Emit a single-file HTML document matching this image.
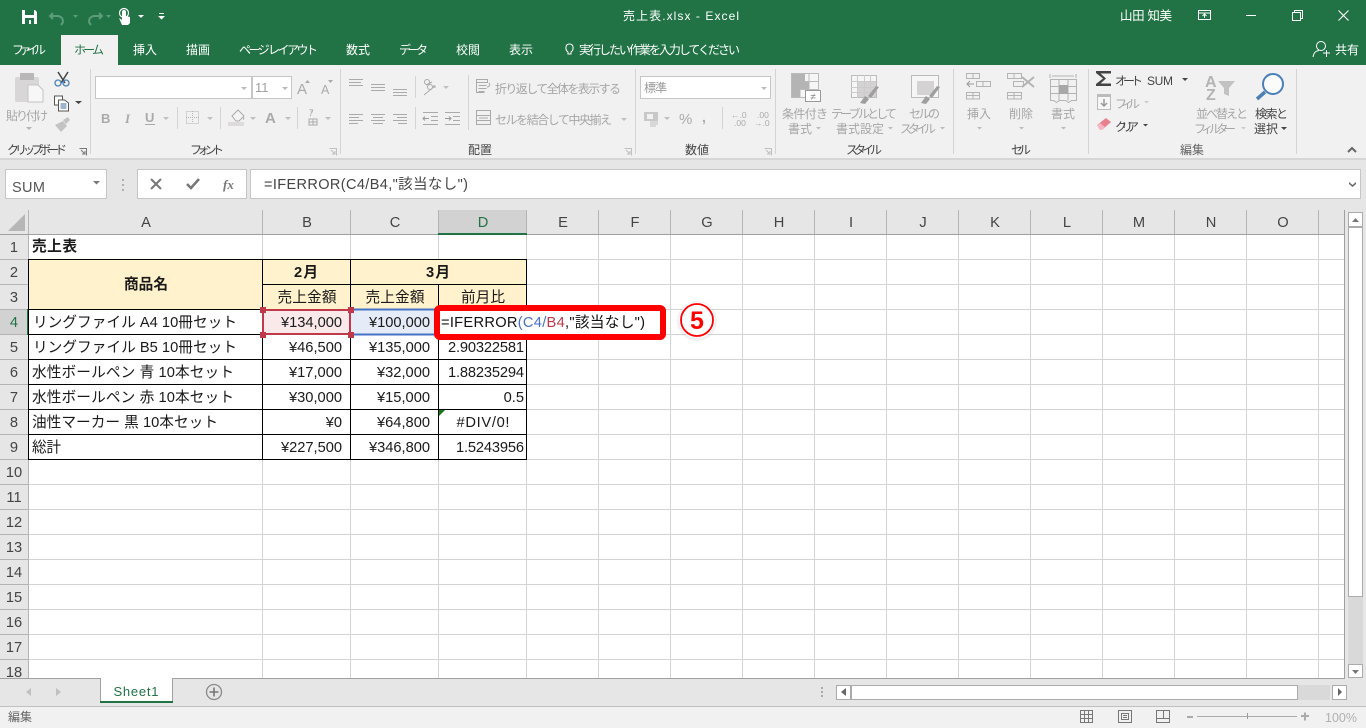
<!DOCTYPE html>
<html lang="ja"><head><meta charset="utf-8"><title>売上表.xlsx - Excel</title>
<style>
html,body{margin:0;padding:0;width:1366px;height:728px;overflow:hidden;background:#e6e6e6}
svg{display:block}
text{font-family:"Liberation Sans","Noto Sans CJK JP",sans-serif}
.rb{font-size:12px;fill:#a6a6a6}
.rd{font-size:12px;fill:#444}
.gl{font-size:12px;fill:#444}
.w{fill:#fff;font-size:12px}
.h{font-size:14.67px;fill:#444;text-anchor:middle}
.c{font-size:14.67px;fill:#1a1a1a}
.r{font-size:14.67px;fill:#1a1a1a;text-anchor:end}
.m{font-size:14.67px;fill:#1a1a1a;text-anchor:middle}
.b{font-weight:700}
.ic{fill:none;stroke:#b4b4b4;stroke-width:1}
.ig{fill:#b4b4b4}
</style></head><body>
<svg width="1366" height="728" viewBox="0 0 1366 728" xmlns="http://www.w3.org/2000/svg">
<!-- title bar -->
<rect width="1366" height="65" fill="#217346"/>
<path d="M22 10h13l2 2v12H22z" fill="#fff"/><rect x="25" y="10" width="9" height="5" fill="#217346"/><rect x="25" y="18" width="9" height="6" fill="#217346"/><rect x="29" y="20" width="2" height="4" fill="#fff"/>
<path d="M53 13l-3 3 3 3M50 16h7c5 0 6 4 6 5 0 2-1 3-2 4" fill="none" stroke="#5d9c7b" stroke-width="2"/><path d="M73 15h5l-2.500 3z" fill="#5d9c7b"/>
<path d="M99 13l3 3-3 3M102 16h-7c-5 0-6 4-6 5 0 2 1 3 2 4" fill="none" stroke="#5d9c7b" stroke-width="2"/><path d="M106 15h5l-2.500 3z" fill="#5d9c7b"/>
<path d="M119 18l3 2v-8a2 2 0 0 1 4 0v4l4 1v6l-2 2h-6z" fill="#fff"/><circle cx="124" cy="13" r="4.500" fill="none" stroke="#fff" stroke-width="1.200"/>
<path d="M138 15h6l-3 3z" fill="#fff"/><path d="M159 13h5v1h-5zM158 16h7l-3.500 3.500z" fill="#fff"/>
<text x="681" y="20" text-anchor="middle" class="w" textLength="116">売上表.xlsx - Excel</text>
<text x="1120" y="20" class="w" textLength="52" style="font-size:12.500px">山田 知美</text>
<rect x="1198.500" y="10.500" width="12" height="9" fill="none" stroke="#fff"/><path d="M1198 13h13M1204.500 18v-3M1202.500 16l2-2 2 2" fill="none" stroke="#fff"/>
<rect x="1246" y="15" width="10" height="1" fill="#fff"/>
<path d="M1292.500 12.500h8v8h-8zM1294.500 12.500v-2h8v8h-2" fill="none" stroke="#fff"/>
<path d="M1338.500 10.500l10 10M1348.500 10.500l-10 10" fill="none" stroke="#fff" stroke-width="1.100"/>
<!-- tabs -->
<rect x="61" y="35" width="57" height="30" fill="#f1f1f1"/>
<text x="12" y="54" class="w" textLength="34">ファイル</text>
<text x="74" y="54" style="font-size:12px;fill:#217346" textLength="30">ホーム</text>
<text x="133" y="54" class="w" textLength="24">挿入</text>
<text x="186" y="54" class="w" textLength="24">描画</text>
<text x="239" y="54" class="w" textLength="79">ページ レイアウト</text>
<text x="346" y="54" class="w" textLength="24">数式</text>
<text x="399" y="54" class="w" textLength="29">データ</text>
<text x="456" y="54" class="w" textLength="24">校閲</text>
<text x="509" y="54" class="w" textLength="24">表示</text>
<path d="M568 52v2h3v-2c3-2 3-8-1.500-8s-4.500 6-1.500 8z" fill="none" stroke="#fff"/>
<text x="579" y="54" class="w" textLength="161">実行したい作業を入力してください</text>
<circle cx="1321" cy="46" r="4.500" fill="none" stroke="#fff"/><path d="M1313 57c1-5 3-6 6-6.500M1323 53h7M1326.500 50v7" fill="none" stroke="#fff"/>
<text x="1335" y="54" class="w" textLength="24">共有</text>
<!-- ribbon -->
<rect y="65" width="1366" height="93" fill="#f1f1f1"/>
<rect y="158" width="1366" height="2" fill="#d6d6d6"/>
<rect y="160" width="1366" height="50" fill="#e6e6e6"/>
<g fill="#d4d4d4"><rect x="90" y="69" width="1" height="85"/><rect x="340" y="69" width="1" height="85"/><rect x="635" y="69" width="1" height="85"/><rect x="775" y="69" width="1" height="85"/><rect x="953" y="69" width="1" height="85"/><rect x="1088" y="69" width="1" height="85"/><rect x="1296" y="69" width="1" height="85"/><rect x="415" y="76" width="1" height="22"/><rect x="415" y="107" width="1" height="22"/><rect x="468" y="75" width="1" height="55"/><rect x="177" y="107" width="1" height="22"/><rect x="220" y="107" width="1" height="22"/><rect x="297" y="107" width="1" height="22"/><rect x="722" y="107" width="1" height="22" /></g>
<!-- clipboard -->
<rect x="15" y="77" width="24" height="25" rx="2" fill="#d9d6d8"/><rect x="20" y="73" width="14" height="7" fill="#b9b7b8"/><path d="M28 85h10l5 5v12H28z" fill="#f7f7f7" stroke="#c4c4c4"/>
<text x="6" y="120" class="rb" textLength="42">貼り付け</text>
<path d="M26 127h6l-3 3z" fill="#b4b4b4"/>
<path d="M58 72l7 11M68 72l-7 11" stroke="#444" stroke-width="1.500" fill="none"/><circle cx="58" cy="83" r="3" fill="none" stroke="#4d82b8" stroke-width="1.300"/><circle cx="66" cy="83" r="3" fill="none" stroke="#4d82b8" stroke-width="1.300"/>
<path d="M54.500 105v-9h8l0 9z" fill="#fff" stroke="#555"/><path d="M58.500 100h6l4 3v8h-10z" fill="#fff" stroke="#555"/><path d="M60.500 104h6M60.500 106h6M60.500 108h6" stroke="#3a6ea5"/>
<path d="M75 101h7l-3.500 3z" fill="#444"/>
<path d="M55 125l8-4 4 5-6 6zM63 120l5-3 2 3-4 4z" fill="#c3c3c3"/>
<text x="7" y="154" class="gl" textLength="60">クリップボード</text>
<path d="M79.500 148.500h7v7M81 150l4 4M85 151v3h-3" fill="none" stroke="#777"/>
<!-- font -->
<rect x="95.500" y="76.500" width="156" height="22" fill="#fff" stroke="#c6c6c6"/><rect x="252.500" y="76.500" width="39" height="22" fill="#fff" stroke="#c6c6c6"/>
<path d="M241 87h6l-3 3z M282 87h6l-3 3z" fill="#bbb"/>
<text x="255" y="92" style="font-size:13px;fill:#a0a0a0">11</text>
<text x="297" y="94" style="font-size:15px;fill:#aaa" font-weight="400">A</text><path d="M305 83h5l-2.500-3z" fill="#aaa"/>
<text x="321" y="94" style="font-size:12.500px;fill:#aaa">A</text><path d="M328 80h5l-2.500 3z" fill="#aaa"/>
<text x="101" y="123" class="b" style="font-size:13px;fill:#aaa">B</text>
<text x="125" y="123" style="font-size:13px;fill:#aaa;font-style:italic;font-family:'Liberation Serif',serif" font-weight="700">I</text>
<text x="145" y="122" class="b" style="font-size:13px;fill:#aaa">U</text><rect x="145" y="124" width="10" height="1" fill="#aaa"/>
<path d="M163 117h6l-3 3z M207 117h6l-3 3z M250 117h6l-3 3z M285 117h6l-3 3z M325 117h6l-3 3z" fill="#c0c0c0"/>
<rect x="186.500" y="111.500" width="12" height="12" fill="none" stroke="#b4b4b4" stroke-dasharray="1 1"/><path d="M192.500 111v12M186 117.500h13" stroke="#b4b4b4" stroke-dasharray="1 1"/>
<path d="M232 116l6-6 6 6-5 5h-3z" fill="#f4f4f4" stroke="#aaa"/><path d="M243 116c1 2 2 3 0 4z" fill="#aaa"/><rect x="228" y="122" width="16" height="4" fill="#dcdadb"/>
<text x="265" y="123" class="b" style="font-size:15px;fill:#aaa">A</text>
<text x="309" y="116" style="font-size:9px;fill:#999">ｱ</text><rect x="309" y="119" width="8" height="6" fill="none" stroke="#aaa"/><path d="M313 119v6M309 122h8" stroke="#aaa"/>
<text x="190" y="154" class="gl" textLength="34">フォント</text>
<path d="M329.500 148.500h7v7M331 150l4 4M335 151v3h-3" fill="none" stroke="#c0c0c0"/>
<!-- align -->
<g stroke="#aaa" fill="none"><path d="M349 79.500h14M349 82.500h12M349 85.500h14M371 84.500h14M371 87.500h14M371 90.500h14M393 89.500h14M393 92.500h14M393 95.500h14M349 114.500h14M349 117.500h10M349 120.500h14M349 123.500h9M371 114.500h14M373 117.500h10M371 120.500h14M373 123.500h10M393 114.500h14M397 117.500h10M393 120.500h14M398 123.500h9M423 112.500h15M431 116.500h7M431 120.500h7M423 124.500h15M445 112.500h15M453 116.500h7M453 120.500h7M445 124.500h15"/><path d="M429 118.500h-6m2-2l-2 2 2 2M445 118.500h6m-2-2l2 2-2 2" stroke="#999"/><path d="M424 95l11-9m-2 0h2v2M426 85l6-3" stroke="#aaa"/></g>
<circle cx="427" cy="82" r="2.500" fill="none" stroke="#aaa"/><circle cx="430" cy="87" r="2.500" fill="none" stroke="#aaa"/>
<path d="M443 86h6l-3 3z" fill="#c0c0c0"/>
<path d="M476.500 79.500h11v3h-11zM476.500 82.500v10h8M478.500 85.500h8M478.500 88.500h8M478.500 91.500h6M489 83c1 1 1 4-2 4" fill="none" stroke="#aaa"/>
<text x="495" y="93" class="rb" textLength="126">折り返して全体を表示する</text>
<rect x="476.500" y="110.500" width="14" height="14" fill="none" stroke="#aaa"/><path d="M476 115.500h15M476 120.500h15M479 118h9" stroke="#aaa" fill="none"/>
<text x="495" y="124" class="rb" textLength="117">セルを結合して中央揃え</text>
<path d="M621 118h6l-3 3z" fill="#c0c0c0"/>
<text x="468" y="154" class="gl" textLength="24">配置</text>
<path d="M624.500 148.500h7v7M626 150l4 4M630 151v3h-3" fill="none" stroke="#c0c0c0"/>
<!-- number -->
<rect x="640.500" y="76.500" width="130" height="22" fill="#fff" stroke="#c6c6c6"/>
<text x="644" y="92" class="rb" style="fill:#999" textLength="23">標準</text>
<path d="M761 87h6l-3 3z" fill="#bbb"/>
<rect x="644" y="112" width="14" height="9" fill="#c8c8c8"/><rect x="647" y="114" width="6" height="5" fill="#f1f1f1"/><path d="M650 122h8M650 124h8M650 126h6" stroke="#c0c0c0"/>
<path d="M664 117h6l-3 3z" fill="#c0c0c0"/>
<text x="679" y="124" style="font-size:15px;fill:#aaa">%</text>
<text x="702" y="122" class="b" style="font-size:14px;fill:#aaa">,</text>
<text x="731" y="118" style="font-size:8.500px;fill:#aaa">←.0</text><text x="734" y="126" style="font-size:8.500px;fill:#aaa">.00</text>
<text x="757" y="118" style="font-size:8.500px;fill:#aaa">.00</text><text x="754" y="126" style="font-size:8.500px;fill:#aaa">→.0</text>
<text x="685" y="154" class="gl" textLength="24">数値</text>
<path d="M764.500 148.500h7v7M766 150l4 4M770 151v3h-3" fill="none" stroke="#c0c0c0"/>
<!-- styles -->
<g stroke="#bbb" fill="#f6f6f6"><rect x="791.500" y="73.500" width="27" height="24"/></g>
<path d="M800 73.500v24M809 73.500v24M791 81.500h27M791 89.500h27" stroke="#bbb"/><path d="M792 74h8v23h-8z M800 82h9v7h-9z M800 74h5v8h-5z" fill="#b4b4b4"/>
<rect x="805.500" y="90.500" width="15" height="11" fill="#fff" stroke="#999"/><text x="813" y="100" text-anchor="middle" style="font-size:10px;fill:#888">≠</text>
<rect x="851.500" y="75.500" width="25" height="22" fill="#f6f6f6" stroke="#bbb"/><rect x="857" y="82" width="19" height="15" fill="#d4d2d3"/><path d="M851 81.500h25M851 87.500h25M851 92.500h25M857.500 75v23M864.500 75v23M870.500 75v23" stroke="#ccc"/>
<path d="M860 103l5-7 4 3-4 5zM868 96l8-10 3 1-8 11z" fill="#9f9f9f"/>
<rect x="911.500" y="75.500" width="27" height="22" fill="#f6f6f6" stroke="#bbb"/><rect x="917" y="81" width="17" height="14" fill="#d4d2d3"/>
<path d="M921 103l5-7 4 3-4 5zM929 96l8-10 3 1-8 11z" fill="#9f9f9f"/>
<text x="782" y="118" class="rb" textLength="46">条件付き</text><text x="788" y="133" class="rb" textLength="24">書式</text><path d="M816 127h5l-2.500 2.500z" fill="#bbb"/>
<text x="831" y="118" class="rb" textLength="66">テーブルとして</text><text x="836" y="133" class="rb" textLength="48">書式設定</text><path d="M888 127h5l-2.500 2.500z" fill="#bbb"/>
<text x="909" y="118" class="rb" textLength="31">セルの</text><text x="900" y="133" class="rb" textLength="36">スタイル</text><path d="M940 127h5l-2.500 2.500z" fill="#bbb"/>
<text x="846" y="154" class="gl" textLength="36">スタイル</text>
<!-- cells group -->
<g fill="none" stroke="#b4b4b4"><path d="M966.500 73.500h13v5h-13zM973 73.500v5M966.500 92.500h13v6.500h-13zM973 92v7M966.500 95.500h13M976.500 81.500h14v5h-14zM983 81.500v5"/><path d="M974 84h-7m3-3l-3 3 3 3" stroke="#999"/>
<path d="M1007.500 73.500h14v5h-14zM1014 73v6M1007.500 92.500h14v6.500h-14zM1014 92v7M1007.500 95.500h14M1013.500 81.500h10v5h-10z"/><path d="M1022 77l12 10M1034 77l-12 10" stroke-width="2"/>
<path d="M1050.500 79.500h26v21h-5l-3 2-3-2h-6l-3 2-3-2h-3zM1059 79.500v21M1068 79.500v21M1050 86.500h27M1050 93.500h27M1050 74v4M1076 74v4M1052 76h22" /></g>
<rect x="1059" y="85" width="9" height="9" fill="#a8a8a8"/>
<text x="967" y="118" class="rb" textLength="24">挿入</text><path d="M977 127h5l-2.500 2.500z" fill="#bbb"/>
<text x="1009" y="118" class="rb" textLength="24">削除</text><path d="M1019 127h5l-2.500 2.500z" fill="#bbb"/>
<text x="1051" y="118" class="rb" textLength="24">書式</text><path d="M1061 127h5l-2.500 2.500z" fill="#bbb"/>
<text x="1011" y="154" class="gl" textLength="20">セル</text>
<!-- edit -->
<path d="M1111 71h-15v2l7 5.500-7 5.500v2h15v-2.500h-10.500l5.500-5-5.500-5h10.500z" fill="#444"/>
<text x="1115" y="85" class="rd" textLength="28">オート</text><text x="1147" y="85" class="rd" textLength="26">SUM</text><path d="M1182 78h6l-3 3z" fill="#444"/>
<rect x="1097.500" y="94.500" width="13" height="15" fill="#f6f6f6" stroke="#bbb"/><rect x="1097" y="94" width="14" height="3" fill="#bbb"/><path d="M1104 99v7m-3-3l3 3 3-3" stroke="#999" fill="none" stroke-width="1.500"/>
<text x="1115" y="108" class="rb" textLength="25">フィル</text><path d="M1144 101h5l-2.500 2.500z" fill="#ccc"/>
<path d="M1097 125l9-7 5 4-9 8h-2z" fill="#e98090"/><path d="M1097 125l3-2 5 4-3 3h-2z" fill="#f4b6c0"/>
<text x="1115" y="131" class="rd" textLength="24">クリア</text><path d="M1143 124h5l-2.500 2.500z" fill="#444"/>
<text x="1205" y="87" class="b" style="font-size:16px;fill:#b4b4b4">A</text><text x="1206" y="100" class="b" style="font-size:16px;fill:#b4b4b4">Z</text>
<path d="M1218 81h17l-6 7v8l-5-2v-6z" fill="#c2c2c2"/>
<text x="1196" y="118" class="rb" textLength="52">並べ替えと</text><text x="1194" y="133" class="rb" textLength="42">フィルター</text><path d="M1241 127h5l-2.500 2.500z" fill="#ccc"/>
<circle cx="1273" cy="84" r="10" fill="#fbfbfb" stroke="#4a7fb8" stroke-width="2"/><path d="M1265 92l-8 7" stroke="#4a7fb8" stroke-width="3.500"/>
<text x="1255" y="118" class="rd" textLength="33">検索と</text><text x="1254" y="133" class="rd" textLength="24">選択</text><path d="M1281 127h6l-3 3z" fill="#444"/>
<text x="1180" y="154" class="gl" style="fill:#666" textLength="24">編集</text>
<path d="M1348 152l4-4 4 4" fill="none" stroke="#666" stroke-width="2"/>
<!-- formula bar -->
<rect x="5.500" y="169.500" width="101" height="29" fill="#fff" stroke="#c6c6c6"/>
<text x="12" y="192" style="font-size:14.500px;fill:#555" textLength="33">SUM</text>
<path d="M93 181h7l-3.500 3.500z" fill="#777"/>
<path d="M122 179h2v2h-2zM122 184h2v2h-2zM122 189h2v2h-2z" fill="#b0b0b0"/>
<rect x="137.500" y="169.500" width="109" height="29" fill="#fff" stroke="#c6c6c6"/>
<path d="M151 179l10 10M161 179l-10 10" stroke="#777" stroke-width="2"/>
<path d="M187 184l4 4 8-9" stroke="#777" stroke-width="2.500" fill="none"/>
<text x="223" y="189" style="font-family:'Liberation Serif',serif;font-style:italic;font-weight:700;font-size:13px;fill:#777">fx</text>
<rect x="250.500" y="169.500" width="1110" height="29" fill="#fff" stroke="#c6c6c6"/>
<text x="264" y="189" style="font-size:14.500px;fill:#444" textLength="204">=IFERROR(C4/B4,"該当なし")</text>
<path d="M1349 182l3.500 3 3.500-3v2l-3.500 3-3.500-3z" fill="#666"/>
<!-- grid -->
<rect x="29" y="235" width="1316" height="443" fill="#fff"/>
<rect x="0" y="210" width="1345" height="25" fill="#e6e6e6"/>
<path d="M8 231l17-17v17z" fill="#b6b6b6"/>
<rect x="438" y="210" width="89" height="24" fill="#d2d2d2"/>
<g fill="#b4b4b4"><rect x="28" y="210" width="1" height="25"/><rect x="262" y="210" width="1" height="25"/><rect x="350" y="210" width="1" height="25"/><rect x="438" y="210" width="1" height="25"/><rect x="526" y="210" width="1" height="25"/><rect x="598" y="210" width="1" height="25"/><rect x="670" y="210" width="1" height="25"/><rect x="742" y="210" width="1" height="25"/><rect x="814" y="210" width="1" height="25"/><rect x="886" y="210" width="1" height="25"/><rect x="958" y="210" width="1" height="25"/><rect x="1030" y="210" width="1" height="25"/><rect x="1102" y="210" width="1" height="25"/><rect x="1174" y="210" width="1" height="25"/><rect x="1246" y="210" width="1" height="25"/><rect x="1318" y="210" width="1" height="25"/></g>
<rect x="0" y="234" width="1345" height="1" fill="#a0a0a0"/><rect x="438" y="233" width="89" height="2" fill="#217346"/>
<path stroke="#d4d4d4" fill="none" d="M0 259.500H1345M0 284.500H1345M0 309.500H1345M0 334.500H1345M0 359.500H1345M0 384.500H1345M0 409.500H1345M0 434.500H1345M0 459.500H1345M0 484.500H1345M0 509.500H1345M0 534.500H1345M0 559.500H1345M0 584.500H1345M0 609.500H1345M0 634.500H1345M0 659.500H1345M262.500 235V678M350.500 235V678M438.500 235V678M526.500 235V678M598.500 235V678M670.500 235V678M742.500 235V678M814.500 235V678M886.500 235V678M958.500 235V678M1030.500 235V678M1102.500 235V678M1174.500 235V678M1246.500 235V678M1318.500 235V678"/>
<rect x="0" y="235" width="28" height="443" fill="#e6e6e6"/>
<path stroke="#b4b4b4" fill="none" d="M0 259.500H28M0 284.500H28M0 309.500H28M0 334.500H28M0 359.500H28M0 384.500H28M0 409.500H28M0 434.500H28M0 459.500H28M0 484.500H28M0 509.500H28M0 534.500H28M0 559.500H28M0 584.500H28M0 609.500H28M0 634.500H28M0 659.500H28M28.500 235V678"/>
<rect x="0" y="310" width="28" height="24" fill="#d2d2d2"/><rect x="27" y="309" width="2" height="26" fill="#217346"/>
<rect x="1344" y="210" width="1" height="468" fill="#a0a0a0"/>
<text class="h" x="146" y="227">A</text><text class="h" x="307" y="227">B</text><text class="h" x="395" y="227">C</text><text class="h" x="483" y="227" style="fill:#217346">D</text><text class="h" x="563" y="227">E</text><text class="h" x="635" y="227">F</text><text class="h" x="707" y="227">G</text><text class="h" x="779" y="227">H</text><text class="h" x="851" y="227">I</text><text class="h" x="923" y="227">J</text><text class="h" x="995" y="227">K</text><text class="h" x="1067" y="227">L</text><text class="h" x="1139" y="227">M</text><text class="h" x="1211" y="227">N</text><text class="h" x="1283" y="227">O</text>
<text class="h" x="14" y="252">1</text><text class="h" x="14" y="277">2</text><text class="h" x="14" y="302">3</text><text class="h" x="14" y="327" style="fill:#217346">4</text><text class="h" x="14" y="352">5</text><text class="h" x="14" y="377">6</text><text class="h" x="14" y="402">7</text><text class="h" x="14" y="427">8</text><text class="h" x="14" y="452">9</text><text class="h" x="14" y="477">10</text><text class="h" x="14" y="502">11</text><text class="h" x="14" y="527">12</text><text class="h" x="14" y="552">13</text><text class="h" x="14" y="577">14</text><text class="h" x="14" y="602">15</text><text class="h" x="14" y="627">16</text><text class="h" x="14" y="652">17</text><text class="h" x="14" y="677">18</text>
<!-- table fills -->
<rect x="29" y="260" width="498" height="49" fill="#fff2cc"/>
<rect x="263" y="310" width="87" height="24" fill="#f9e9ea"/>
<rect x="351" y="310" width="87" height="24" fill="#e6ecf7"/>
<path stroke="#000" fill="none" d="M28 259.500H527M263 284.500H527M28 309.500H527M28 334.500H527M28 359.500H527M28 384.500H527M28 409.500H527M28 434.500H527M28 459.500H527M28.500 260V460M262.500 259V460M350.500 259V460M438.500 284V460M526.500 259V460"/>
<!-- ranges -->
<path d="M351 309.500h87M351 334.500h87" fill="none" stroke="#4472c4" stroke-width="2"/>
<rect x="263" y="310" width="87" height="24" fill="none" stroke="#c0394b" stroke-width="2"/>
<g fill="#c0394b"><rect x="260" y="307" width="6" height="6"/><rect x="348" y="307" width="6" height="6"/><rect x="260" y="332" width="6" height="6"/><rect x="348" y="332" width="6" height="6"/></g>
<!-- cell text -->
<text class="c b" x="32" y="251" textLength="45">売上表</text>
<text class="m b" x="146" y="289" textLength="44">商品名</text>
<text class="m b" x="306" y="277" textLength="24">2月</text>
<text class="m b" x="438" y="277" textLength="24">3月</text>
<text class="m" x="307" y="302" textLength="59">売上金額</text>
<text class="m" x="395" y="302" textLength="59">売上金額</text>
<text class="m" x="483" y="302" textLength="44">前月比</text>
<text class="c" x="33" y="327" textLength="204">リングファイル A4 10冊セット</text>
<text class="c" x="33" y="352" textLength="204">リングファイル B5 10冊セット</text>
<text class="c" x="32" y="377" textLength="202">水性ボールペン 青 10本セット</text>
<text class="c" x="32" y="402" textLength="202">水性ボールペン 赤 10本セット</text>
<text class="c" x="32" y="427" textLength="186">油性マーカー 黒 10本セット</text>
<text class="c" x="32" y="452" textLength="29">総計</text>
<text class="r" x="342" y="327" textLength="61">¥134,000</text><text class="r" x="342" y="352" textLength="53">¥46,500</text><text class="r" x="342" y="377" textLength="53">¥17,000</text><text class="r" x="342" y="402" textLength="53">¥30,000</text><text class="r" x="342" y="427">¥0</text><text class="r" x="342" y="452" textLength="61">¥227,500</text>
<text class="r" x="430" y="327" textLength="61">¥100,000</text><text class="r" x="430" y="352" textLength="61">¥135,000</text><text class="r" x="430" y="377" textLength="53">¥32,000</text><text class="r" x="430" y="402" textLength="53">¥15,000</text><text class="r" x="430" y="427" textLength="53">¥64,800</text><text class="r" x="430" y="452" textLength="61">¥346,800</text>
<text class="r" x="524" y="352" textLength="76">2.90322581</text><text class="r" x="524" y="377" textLength="76">1.88235294</text><text class="r" x="524" y="402">0.5</text><text class="m" x="483" y="427" textLength="53">#DIV/0!</text><text class="r" x="524" y="452" textLength="68">1.5243956</text>
<path d="M439 410h6l-6 6z" fill="#0f7b0f"/>
<!-- edit callout -->
<rect x="437" y="308" width="226" height="29" rx="3" fill="#fff" stroke="#f00" stroke-width="6"/>
<text x="441" y="327" style="font-size:14.670px;fill:#111" textLength="204"><tspan>=IFERROR</tspan><tspan fill="#4472c4">(C4/</tspan><tspan fill="#c0394b">B4</tspan><tspan>,"該当なし")</tspan></text>
<circle cx="697" cy="321" r="20" fill="#888" opacity=".12"/>
<circle cx="697" cy="320" r="18" fill="#fff"/>
<circle cx="697" cy="320" r="16" fill="#fff" stroke="#f00" stroke-width="1.800"/>
<text x="697" y="329" text-anchor="middle" style="font-size:25px;font-weight:700;fill:#f00">5</text>
<!-- scrollbars -->
<rect x="1345" y="210" width="21" height="468" fill="#e6e6e6"/>
<rect x="1348" y="228" width="15" height="436" fill="#d9d9d9"/>
<rect x="1348.500" y="227.500" width="14" height="369" fill="#fff" stroke="#ababab"/>
<rect x="1348.500" y="212.500" width="14" height="14" fill="#fff" stroke="#ababab"/><path d="M1352 222h7l-3.500-4z" fill="#777"/>
<rect x="1348.500" y="664.500" width="14" height="13" fill="#fff" stroke="#ababab"/><path d="M1352 670h7l-3.500 4z" fill="#777"/>
<!-- sheet tabs -->
<rect x="0" y="679" width="1366" height="27" fill="#e6e6e6"/>
<rect x="0" y="678" width="1345" height="1" fill="#a0a0a0"/>
<rect x="100" y="678" width="73" height="24" fill="#fff"/><path d="M100.500 678v24M172.500 678v24" stroke="#a0a0a0" fill="none"/><rect x="100" y="701" width="73" height="2" fill="#217346"/>
<path d="M31 688l-5 4 5 4zM56 688l5 4-5 4z" fill="#c0c0c0"/>
<text x="136" y="696" text-anchor="middle" style="font-size:13px;fill:#217346" textLength="45">Sheet1</text>
<circle cx="214" cy="692" r="7.500" fill="none" stroke="#8a8a8a" stroke-width="1.300"/><path d="M209.500 692h9M214 687.500v9" stroke="#777" stroke-width="1.600"/>
<path d="M821 687h2v2h-2zM821 691h2v2h-2zM821 695h2v2h-2z" fill="#aaa"/>
<rect x="836.500" y="685.500" width="14" height="14" fill="#fff" stroke="#ababab"/><path d="M846 688v8l-5-4z" fill="#666"/>
<rect x="851" y="685" width="479" height="15" fill="#d9d9d9"/><rect x="851.500" y="685.500" width="446" height="14" fill="#fff" stroke="#ababab"/>
<rect x="1332.500" y="685.500" width="14" height="14" fill="#fff" stroke="#ababab"/><path d="M1338 688v8l4-4z" fill="#666"/>
<!-- status -->
<rect x="0" y="706" width="1366" height="22" fill="#f1f1f1"/><rect x="0" y="706" width="1366" height="1" fill="#c0c0c0"/>
<text x="8" y="721" style="font-size:12px;fill:#666" textLength="24">編集</text>
<path d="M1080.500 710.500h12v12h-12zM1084.500 710v13M1088.500 710v13M1080 714.500h13M1080 718.500h13" fill="none" stroke="#777"/>
<path d="M1118.500 710.500h13v12h-13zM1121.500 713.500h7v6h-7zM1123 715.500h4M1123 717.500h4" fill="none" stroke="#777"/>
<path d="M1156.500 710.500h13v12h-13zM1156 718.500h14M1163.500 710v8" fill="none" stroke="#777"/>
<rect x="1187" y="716" width="6" height="2" fill="#aaa"/><rect x="1197" y="716" width="100" height="1" fill="#aaa"/><rect x="1247" y="713" width="1" height="6" fill="#999"/><path d="M1301 716h8M1305 712.500v8" stroke="#aaa" stroke-width="2"/>
<text x="1325" y="722" style="font-size:12.500px;fill:#b0b0b0" textLength="32">100%</text>
</svg>
</body></html>
